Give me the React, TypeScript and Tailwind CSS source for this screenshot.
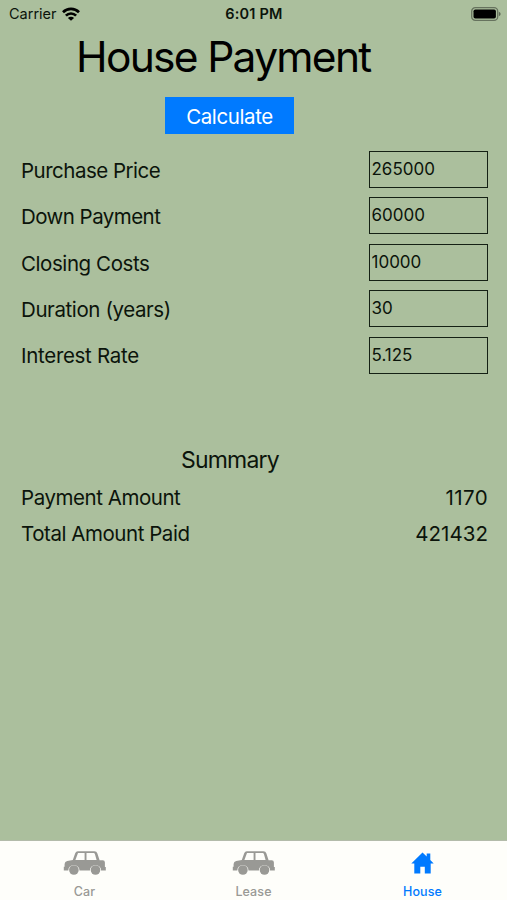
import { useState } from "react";

const fields = [
  { id: "price", label: "Purchase Price", value: "265000", tracking: "tracking-[-0.5px]" },
  { id: "down", label: "Down Payment", value: "60000", tracking: "tracking-[-0.55px]" },
  { id: "closing", label: "Closing Costs", value: "10000", tracking: "tracking-[-0.42px]" },
  { id: "years", label: "Duration (years)", value: "30", tracking: "tracking-[-0.4px]" },
  { id: "rate", label: "Interest Rate", value: "5.125", tracking: "tracking-[-0.3px]" },
];

function WifiIcon() {
  return (
    <svg width="18" height="14" viewBox="0 0 18 14" fill="none" stroke="#000" strokeWidth="2.7">
      <path d="M1 5.2A11.4 11.4 0 0 1 17 5.2" />
      <path d="M3.9 8.6A7.2 7.2 0 0 1 14.1 8.6" />
      <path d="M9 13.8L5.9 11A4.3 4.3 0 0 1 12.1 11Z" fill="#000" stroke="none" />
    </svg>
  );
}

function BatteryIcon() {
  return (
    <svg width="30" height="14" viewBox="0 0 30 14">
      <rect x="0.7" y="0.7" width="26" height="12.6" rx="3.6" fill="none" stroke="#000" strokeOpacity="0.4" strokeWidth="1.3" />
      <rect x="2.5" y="2.5" width="22.4" height="9" rx="1.8" fill="#000" />
      <path d="M27.9 4.8Q29.7 5.5 29.7 7T27.9 9.2Z" fill="#000" fillOpacity="0.45" />
    </svg>
  );
}

function CarIcon() {
  return (
    <svg width="43" height="24" viewBox="0 0 43 24" fill="currentColor">
      <path
        fillRule="evenodd"
        d="M14.8 0.2H31.4Q33.7 0.2 34.4 2.4L36.6 9.2H39.8Q41.9 9.3 41.9 11.4V16H42.8V19.5H38.1A5.6 5.6 0 0 0 26.9 19.5H16.5A5.6 5.6 0 0 0 5.3 19.5H0.8V15.8H1.6V13Q1.8 10.6 4.2 10L9.8 8.9L12.3 2Q13 0.2 14.8 0.2ZM15 2L12.4 9H21.6V2ZM23.5 2V9H33.6L31.9 3.1Q31.6 2 30.6 2Z"
      />
      <circle cx="10.9" cy="19" r="4.8" />
      <circle cx="32.5" cy="19" r="4.8" />
    </svg>
  );
}

function HouseIcon() {
  return (
    <svg width="23" height="22" viewBox="0 0 23 22" fill="currentColor">
      <path d="M11.5 0.4L15.7 4.5V1.6H19.3V8L22.7 11.4H19.7V21.6H13.8V14.8H9.3V21.6H3.3V11.4H0.3Z" />
    </svg>
  );
}

const tabs = [
  { name: "Car", icon: <CarIcon /> },
  { name: "Lease", icon: <CarIcon /> },
  { name: "House", icon: <HouseIcon /> },
];

export default function App() {
  const [values, setValues] = useState(fields.map((f) => f.value));
  const [activeTab, setActiveTab] = useState("House");
  const [summary, setSummary] = useState({ payment: "1170", total: "421432" });

  const calculate = () => {
    const [price, down, closing, years, rate] = values.map(Number);
    const principal = price - down + closing;
    const months = years * 12;
    const r = rate / 1200;
    const payment = r ? (principal * r) / (1 - Math.pow(1 + r, -months)) : principal / months;
    setSummary({ payment: String(Math.floor(payment)), total: String(Math.floor(payment * months)) });
  };

  return (
    <div className="flex h-[900px] w-[507px] flex-col overflow-hidden bg-[#abbf9d] font-[Inter,sans-serif] text-[#0b140b]">
      {/* Status bar */}
      <div className="grid h-[27px] shrink-0 grid-cols-3 items-center pr-[6px] pl-[9px]">
        <div className="flex items-center gap-[5px] text-[14.5px]">
          Carrier
          <WifiIcon />
        </div>
        <div className="pr-[2px] text-center text-[14.5px] font-semibold tracking-[0.2px]">6:01 PM</div>
        <div className="flex justify-end">
          <BatteryIcon />
        </div>
      </div>

      <h1 className="mt-1 ml-[76px] text-[42.5px] leading-[52px] tracking-[-1.7px] whitespace-nowrap text-black">
        House Payment
      </h1>
      <button
        onClick={calculate}
        className="mt-[14px] ml-[165px] h-[37px] w-[129px] shrink-0 bg-[#007aff] pt-[3px] text-[20.5px] tracking-[-0.4px] text-white"
      >
        Calculate
      </button>

      <div className="mt-[17px] flex flex-col gap-[9.4px] pr-[19px] pl-[21px]">
        {fields.map((field, i) => (
          <div key={field.id} className="flex h-[37px] items-center justify-between">
            <label htmlFor={field.id} className={`pt-[3.5px] text-[20.5px] ${field.tracking}`}>
              {field.label}
            </label>
            <input
              id={field.id}
              value={values[i]}
              onChange={(e) => setValues(values.map((v, n) => (n === i ? e.target.value : v)))}
              className="h-[37px] w-[119px] border border-[#142014] pb-px pl-[1.5px] text-[17px] outline-none"
            />
          </div>
        ))}
      </div>

      <h2 className="mt-[71px] ml-[181px] text-[23px] leading-[30px] tracking-[-0.8px]">Summary</h2>
      <div className="mt-[5px] flex flex-col pr-[19px] pl-[21px] text-[20.5px] leading-[36px] tracking-[-0.45px]">
        <div className="flex justify-between">
          <span>Payment Amount</span>
          <span className="tracking-[0.4px]">{summary.payment}</span>
        </div>
        <div className="flex justify-between">
          <span>Total Amount Paid</span>
          <span className="tracking-[0.05px]">{summary.total}</span>
        </div>
      </div>

      {/* Tab bar */}
      <nav className="mt-auto grid h-[60px] shrink-0 grid-cols-3 border-t border-[#b3bbaa] bg-[#fefefa]">
        {tabs.map((tab) => (
          <button
            key={tab.name}
            onClick={() => setActiveTab(tab.name)}
            className={`flex flex-col items-center pt-[10px] text-[12.5px] leading-4 font-medium tracking-[0.1px] ${
              activeTab === tab.name ? "text-[#007aff]" : "text-[#999995]"
            }`}
          >
            <span className="flex h-[24px] items-center">{tab.icon}</span>
            <span className="mt-[9px]">{tab.name}</span>
          </button>
        ))}
      </nav>
    </div>
  );
}
